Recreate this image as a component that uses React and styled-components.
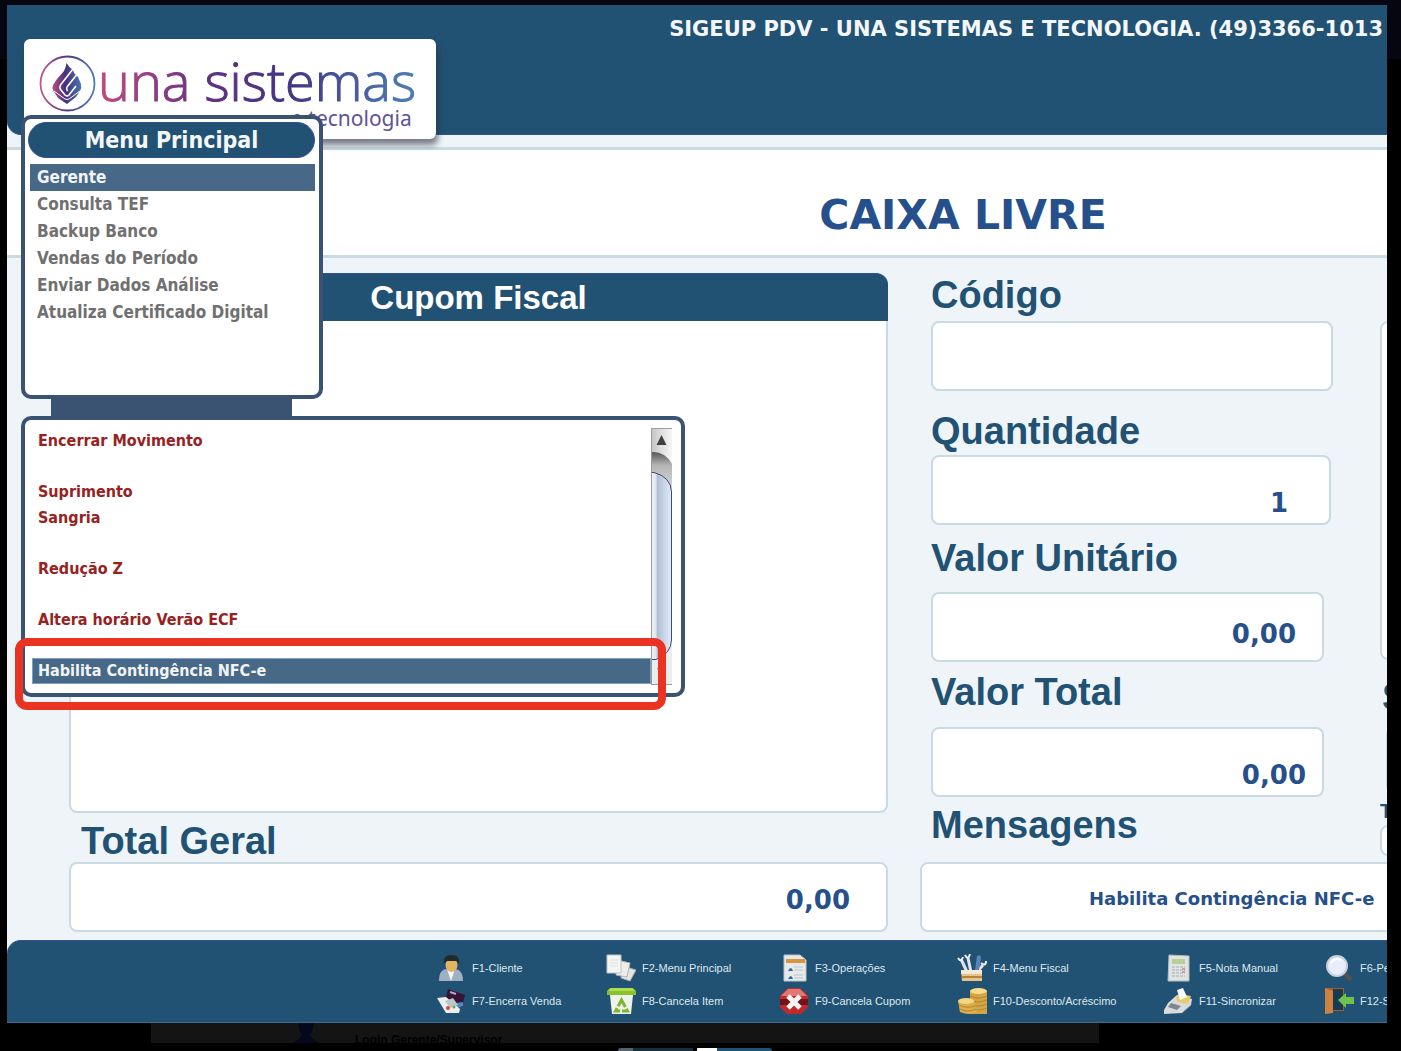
import React, { useState } from 'react';
import styled, { createGlobalStyle } from 'styled-components';

const GlobalStyle = createGlobalStyle`
  * {
    box-sizing: border-box;
  }

  body {
    margin: 0;
    background: #000;
    overflow: hidden;
  }

  button,
  input {
    font: inherit;
    color: inherit;
    border: 0;
    background: none;
  }
`;

const navy = '#225273';
const frame = '#3a5373';
const ink = '#25508b';
const line = '#c9dae3';
const verdana = "Verdana, 'DejaVu Sans', sans-serif";
const tahoma = "Tahoma, 'DejaVu Sans Condensed', 'DejaVu Sans', sans-serif";
const arial = "'Liberation Sans', Arial, sans-serif";

const Backdrop = styled.div`
  padding: 5px 14px 0 7px;
  background: linear-gradient(#05060f 59px, #000 59px);
`;

const Window = styled.main`
  position: relative;
  overflow: hidden;
  background: #eff4f9;
  border-bottom: 1px solid #3f6c8c;
`;

const TopBar = styled.header`
  display: flex;
  justify-content: space-between;
  align-items: flex-start;
  height: 130px;
  padding: 0 4px 0 17px;
  background: ${navy};
  border-bottom: 1px solid #34508f;
  border-bottom-left-radius: 14px;
`;

const LogoCard = styled.div`
  flex: none;
  width: 412px;
  height: 100px;
  margin-top: 34px;
  border-radius: 6px;
  background: #fff;
  box-shadow: 2px 6px 6px rgba(40, 45, 60, 0.6);

  svg {
    display: block;
  }
`;

const Company = styled.p`
  margin: 12px 0 0;
  font: bold 21px/24px ${verdana};
  color: #f4f7f9;
  white-space: nowrap;
`;

const Status = styled.section`
  margin-top: 12px;
  padding: 40px 0 15px 532px;
  background: #fff;
  border-top: 3px solid ${line};
  border-bottom: 3px solid ${line};
  text-align: center;

  h1 {
    margin: 0;
    font: bold 41px/50px ${verdana};
    color: ${ink};
    white-space: nowrap;
  }
`;

const Content = styled.div`
  display: grid;
  grid-template-columns: 819px 402px 1fr;
  column-gap: 43px;
  padding: 15px 0 8px 62px;
`;

const Column = styled.div`
  display: flex;
  flex-direction: column;
`;

const Coupon = styled.section`
  display: flex;
  flex-direction: column;
  height: 540px;
  background: #fff;
  border: 2px solid ${line};
  border-top: 0;
  border-radius: 12px 12px 8px 8px;

  h2 {
    margin: 0 -2px;
    border-top: 1px solid #34508f;
    border-radius: 12px 12px 0 0;
    background: ${navy};
    color: #fff;
    font: bold 33px/47px ${arial};
    text-align: center;
  }
`;

const Label = styled.label`
  padding-top: ${({ $drop }) => $drop || 0}px;
  padding-bottom: ${({ $rise }) => $rise || 0}px;
  padding-left: ${({ $indent }) => $indent || 0}px;
  font: bold 38px/${({ $height }) => $height}px ${arial};
  color: ${navy};
  white-space: nowrap;
`;

const Value = styled.input`
  width: ${({ $width }) => $width || '100%'};
  height: 70px;
  padding: ${({ $pad }) => $pad || '0'};
  background: #fff;
  border: 2px solid ${line};
  border-radius: 8px;
  color: ${ink};
  font: bold ${({ $size }) => $size || 26}px ${verdana};
  text-align: ${({ $align }) => $align || 'right'};
  outline: 0;
`;

const MessageField = styled.div`
  display: flex;
  flex-direction: column;
  margin-left: -11px;
  margin-right: -60px;
`;

const SideColumn = styled(Column)`
  margin-left: 4px;
`;

const SideBox = styled.div`
  height: ${({ $height }) => $height}px;
  margin-top: ${({ $top }) => $top || 0}px;
  margin-left: ${({ $indent }) => $indent || 0}px;
  background: ${({ $plain }) => ($plain ? '#e6edf2' : '#fff')};
  border: 2px solid ${line};
  border-right: 0;
  border-radius: 8px 0 0 8px;
`;

const SideLabel = styled.span`
  overflow: hidden;
  padding-top: ${({ $drop }) => $drop}px;
  padding-left: ${({ $indent }) => $indent || 0}px;
  font: bold ${({ $size }) => $size}px/${({ $height }) => $height}px ${arial};
  color: ${navy};
`;

const Shortcuts = styled.footer`
  display: grid;
  grid-template-columns: 170px 173px 178px 206px 161px 200px;
  row-gap: 4px;
  padding: 12px 0 7px 429px;
  background: ${navy};
  border-top: 1px solid #34508f;
  border-top-left-radius: 14px;
`;

const Shortcut = styled.button`
  display: flex;
  align-items: center;
  gap: 6px;
  height: 29px;
  padding: 0;
  color: #dce8ef;
  font: 11px/16px ${arial};
  white-space: nowrap;

  svg {
    flex: none;
  }
`;

const Menus = styled.nav`
  position: absolute;
  top: 110px;
  left: 14px;
`;

const Panel = styled.section`
  border: 4px solid ${frame};
  border-radius: 10px;
  background: #fff;
`;

const List = styled.ul`
  flex: 1;
  margin: 0;
  padding: 0;
  list-style: none;
`;

const MainMenu = styled(Panel)`
  width: 302px;
  height: 284px;
  padding: 3px 4px 3px 3px;

  h2 {
    margin: 0 0 6px;
    border: 1px solid #34508f;
    border-radius: 18px;
    background: ${navy};
    color: #f4f7f9;
    font: bold 23px/34px ${tahoma};
    text-align: center;
  }

  ${List} {
    padding-left: 2px;
  }
`;

const MainItem = styled.button`
  display: block;
  width: 100%;
  padding: 0 7px;
  background: ${({ $active }) => ($active ? '#476886' : 'transparent')};
  color: ${({ $active }) => ($active ? '#f1f4f6' : '#707070')};
  font: bold 17px/27px ${tahoma};
  text-align: left;
`;

const Connector = styled.div`
  width: 241px;
  height: 18px;
  margin: -1px 0 0 30px;
  background: ${frame};
`;

const SubMenu = styled(Panel)`
  display: flex;
  width: 664px;
  height: 281px;
  padding: 8px 8px 7px 7px;
`;

const SubItem = styled.li`
  margin-bottom: ${({ $space }) => ($space ? 25 : 0)}px;

  button {
    display: block;
    width: 100%;
    padding: 0 5px;
    border: 1px solid ${({ $active }) => ($active ? '#7ba0c8' : 'transparent')};
    background: ${({ $active }) => ($active ? '#476886' : 'transparent')};
    color: ${({ $active }) => ($active ? '#f1f4f6' : '#962222')};
    font: bold 16px/24px ${tahoma};
    text-align: left;
  }
`;

const Highlight = styled.div`
  position: absolute;
  top: 523px;
  left: -6px;
  width: 651px;
  height: 72px;
  border: 8px solid #ea3323;
  border-radius: 12px;
  pointer-events: none;
`;

const Behind = styled.div`
  display: flex;
  align-items: flex-start;
  gap: 34px;
  height: 20px;
  margin: 0 288px 0 144px;
  padding-left: 140px;
  overflow: hidden;
  background: #141414;
  color: #000;
  font: bold 12px/18px ${arial};

  p {
    margin: 8px 0 0;
  }
`;

const Tabs = styled.div`
  display: flex;
  gap: 4px;
  height: 8px;
  padding: 5px 0 0 611px;
`;

const Tab = styled.span`
  width: 75px;
  height: 3px;
  border-radius: ${({ $on }) => ($on ? '2px 6px 0 0' : '6px 2px 0 0')};
  background: ${({ $on }) => ($on ? 'linear-gradient(90deg, #fff 20px, #225273 20px)' : 'linear-gradient(90deg, #55636c 15px, #16303f 15px)')};
`;

const Logo = () => (
  <svg width="412" height="100" viewBox="24 39 412 100" role="img" aria-label="una sistemas e tecnologia">
    <defs>
      <linearGradient id="word" gradientUnits="userSpaceOnUse" x1="100" y1="0" x2="416" y2="0">
        <stop offset="0" stopColor="#bf4a80" />
        <stop offset=".35" stopColor="#5d3180" />
        <stop offset=".6" stopColor="#433582" />
        <stop offset="1" stopColor="#4a7fb5" />
      </linearGradient>
      <linearGradient id="ring" gradientUnits="userSpaceOnUse" x1="40" y1="0" x2="95" y2="0">
        <stop offset="0" stopColor="#c8558c" />
        <stop offset=".5" stopColor="#4f3a86" />
        <stop offset="1" stopColor="#4a7fb5" />
      </linearGradient>
      <linearGradient id="flame" gradientUnits="userSpaceOnUse" x1="52" y1="0" x2="81" y2="0">
        <stop offset="0" stopColor="#c04f86" />
        <stop offset=".45" stopColor="#46307c" />
        <stop offset="1" stopColor="#4876ae" />
      </linearGradient>
    </defs>
    <circle cx="67.500" cy="83.500" r="27" fill="none" stroke="url(#ring)" strokeWidth="1.800" />
    <path
      d="M66.500 63 69.500 67 73 70 74 73 78 77 81 84Q82 88 80 91L76 97 67 104 58 98 53.500 91Q51.500 88 53 85L57 79 64 71Q66 67 66.500 63Z"
      fill="url(#flame)"
    />
    <path
      d="M73 69 60.500 85Q59 88 61 90L65 95Q67 97 69 95L76 86M76.500 75 67 87Q66 89 67.500 91"
      fill="none"
      stroke="#fff"
      strokeWidth="1.600"
    />
    <path d="M54 91 65 99Q67 100 69 99L80 91" fill="none" stroke="#fff" strokeWidth="1" />
    <text
      x="98"
      y="101"
      fontFamily="'Open Sans', sans-serif"
      fontWeight="300"
      fontSize="54"
      fill="url(#word)"
      stroke="url(#word)"
      strokeWidth="1"
    >
      una sistemas
    </text>
    <text x="291" y="126" fontFamily="'Noto Sans', sans-serif" fontSize="21" fill="#5f5397">e tecnologia</text>
  </svg>
);

const ScrollBar = () => (
  <svg width="22" height="257" viewBox="0 0 22 257" aria-hidden="true">
    <defs>
      <linearGradient id="track">
        <stop offset="0" stopColor="#c4c4c4" />
        <stop offset=".5" stopColor="#dedede" />
        <stop offset="1" stopColor="#f6f6f6" />
      </linearGradient>
      <linearGradient id="thumb">
        <stop offset="0" stopColor="#f2f4f6" />
        <stop offset=".25" stopColor="#dfe5ec" />
        <stop offset=".3" stopColor="#b0bdd2" />
        <stop offset="1" stopColor="#e2edfc" />
      </linearGradient>
      <linearGradient id="shade" x1="0" y1="0" x2="0" y2="1">
        <stop offset="0" stopColor="#555" />
        <stop offset=".35" stopColor="#b5b5b5" />
        <stop offset="1" stopColor="#d8d8d8" />
      </linearGradient>
    </defs>
    <path d="M0 .5h21v256H0Z" fill="url(#track)" />
    <path d="M0 24q14-1 21 12v26H0Z" fill="url(#shade)" />
    <path d="M0 215h21v41H0Z" fill="#ececec" />
    <path d="M0 44.500h3Q20 49 20.500 64v148Q20 226 5 231.500H0Z" fill="url(#thumb)" stroke="#3d4a60" />
    <path d="M.5 257V.5H21M0 256.500h21" fill="none" stroke="#9c9c9c" />
    <path d="M10.500 7 15.500 17h-10Z" fill="#3f3f3f" />
    <path d="M6 240h9l-4.500 9Z" fill="#777" />
  </svg>
);

const drawings = {
  client: (
    <>
      <path d="M3 27c0-9 3-12 9-12h6c6 0 9 4 9 12Z" fill="#9fb0c4" />
      <path d="m11 15 4 12 4-12Z" fill="#f5f7fa" />
      <ellipse cx="15.500" cy="11" rx="6" ry="7" fill="#e2b562" />
      <path d="M8 10C7 4 10 1 15.500 1S24 4 23 10c-2-4-4-3-7-3s-6-1-8 3Z" fill="#222a2c" />
    </>
  ),
  pages: (
    <>
      <path d="m17 12 13 4-6 11-9-3Z" fill="#e4e4e4" stroke="#aaa" />
      <path d="m11 6 13 3-3 14-11-2Z" fill="#ededed" stroke="#b5b5b5" />
      <path d="M1 1h14v18H1Z" fill="#f5f5f5" stroke="#c2c2c2" />
      <path d="M4 6h8M4 9h8M4 12h8" stroke="#ddd" />
    </>
  ),
  report: (
    <>
      <path d="M5 1h16l6 5v21H5Z" fill="#e6e9ec" stroke="#bcc3c9" />
      <path d="M7 5h19v4H7Z" fill="#dd9339" />
      <path d="M15 13h9M15 16h9M15 21h9M15 24h9" stroke="#bbc4cc" />
      <path d="M9 17q3-6 5 0ZM9 25q3-6 5 0Z" fill="#356b9b" />
    </>
  ),
  tools: (
    <>
      <path d="m4 5 6 13M11 4l3 14M26 11l-7 8" stroke="#dfe4e8" strokeWidth="3" />
      <path d="M1 4q3 5 5-1M8 1q3 6 5-1M24 9q5 4 5-2" fill="none" stroke="#eef1f3" strokeWidth="2" />
      <path d="M20 2q4-2 4 2l-2 12h-4Z" fill="#5a83bd" />
      <path d="M4 16h21v11H5Z" fill="#e3c48b" />
      <path d="M4 16h21v4H4Z" fill="#f5e9d3" />
      <path d="M5 23h20" stroke="#b9823c" strokeWidth="2" />
    </>
  ),
  calculator: (
    <>
      <path d="m6 1 20 1v25H5Z" fill="#dfe4e3" stroke="#b5bdba" />
      <path d="M9 5h13v5H9Z" fill="#b8cf96" />
      <path d="M9 13h13M9 16h13M9 19h13M9 22h13" stroke="#a5adb0" strokeDasharray="3 1" />
      <path d="M19 15h3M19 18h3" stroke="#d35b55" />
    </>
  ),
  search: (
    <>
      <path d="m20 19 7 7" stroke="#57504d" strokeWidth="4" />
      <circle cx="13" cy="12" r="10" fill="#e8edfa" stroke="#c7d0dc" strokeWidth="2" />
      <path d="M7 9q4-6 10-3" fill="none" stroke="#fff" strokeWidth="2" />
    </>
  ),
  card: (
    <>
      <path d="m12 2 17 6-3 12-17-6Z" fill="#351436" />
      <path d="m14 5 6 2" stroke="#c5a6c2" strokeWidth="2" />
      <path d="m20 16 7-1v4l-6 2Z" fill="#5587c2" />
      <path d="m1 11 9-1 14 12-1 4H10Z" fill="#eceeee" />
      <path d="m9 14 8-3 5 7-8 3Z" fill="#c0c5c8" />
      <circle cx="12" cy="21" r="2" fill="#d64b3c" />
      <circle cx="18" cy="20" r="1.500" fill="#57b055" />
    </>
  ),
  bin: (
    <>
      <path d="M4 8h23l-2 19H6Z" fill="#eef2ec" />
      <path d="M1 4 4 1h23l3 3v4H1Z" fill="#8abf2e" />
      <path d="M2 4 5 1h21l3 3Z" fill="#aede4d" />
      <path d="m15.500 13 6 11h-12Z" fill="none" stroke="#7fb52f" strokeWidth="3" strokeDasharray="8 2" />
    </>
  ),
  cancel: (
    <>
      <path d="M9 1h12l8 8v11l-7 7H8l-7-7V9Z" fill="#c1292c" />
      <path d="M9 2h12l7 7H2Z" fill="#e27876" />
      <path d="M1 12h28v6H1Z" fill="#701417" />
      <path d="m9 9 12 12M21 9 9 21" stroke="#f4f4f4" strokeWidth="5" />
    </>
  ),
  coins: (
    <>
      <path d="M13 4h17v23H13Z" fill="#d4a544" />
      <ellipse cx="21.500" cy="4" rx="8.500" ry="3" fill="#f6dd8b" />
      <path d="M13 9q8 4 17 0M13 13q8 4 17 0M13 17q8 4 17 0M13 21q8 4 17 0" fill="none" stroke="#b5852e" />
      <path d="M1 14h16l3 11q-8 4-17 0Z" fill="#dcae4e" />
      <ellipse cx="9" cy="14" rx="8" ry="3" fill="#f4d780" />
      <path d="M2 18q7 4 16 1M3 22q7 4 16 0" fill="none" stroke="#b5852e" />
    </>
  ),
  printer: (
    <>
      <path d="m5 16 9-8 15 4-1 6-9 8-18 1v-4Z" fill="#d8dcdc" />
      <path d="m13 10 3-3 12 2-3 8-11-2Z" fill="#e6cc70" />
      <path d="m14 3 6-2 4 9-7 3Z" fill="#fff" />
      <path d="m8 16 10 3-4 4-9-3Z" fill="#7d878c" />
      <path d="m19 26 9-8" stroke="#8f999e" />
    </>
  ),
  exit: (
    <>
      <path d="M1 1h19v23H1Z" fill="#a65e28" />
      <path d="M9 2h10v21H9Z" fill="#183b51" />
      <path d="m1 1 8 3v22l-8 1Z" fill="#cf8142" />
      <path d="m14 13 8-7v4h8v7h-8v4Z" fill="#6fc24d" />
    </>
  ),
};

const Icon = ({ name }) => (
  <svg width="30" height="28" viewBox="0 0 30 28" aria-hidden="true">
    {drawings[name]}
  </svg>
);

const shortcuts = [
  ['client', 'F1-Cliente'],
  ['pages', 'F2-Menu Principal'],
  ['report', 'F3-Operações'],
  ['tools', 'F4-Menu Fiscal'],
  ['calculator', 'F5-Nota Manual'],
  ['search', 'F6-Pesquisa'],
  ['card', 'F7-Encerra Venda'],
  ['bin', 'F8-Cancela Item'],
  ['cancel', 'F9-Cancela Cupom'],
  ['coins', 'F10-Desconto/Acréscimo'],
  ['printer', 'F11-Sincronizar'],
  ['exit', 'F12-Sair'],
];

const mainItems = [
  'Gerente',
  'Consulta TEF',
  'Backup Banco',
  'Vendas do Período',
  'Enviar Dados Análise',
  'Atualiza Certificado Digital',
];

const subItems = [
  { name: 'Encerrar Movimento', space: true },
  { name: 'Suprimento' },
  { name: 'Sangria', space: true },
  { name: 'Redução Z', space: true },
  { name: 'Altera horário Verão ECF', space: true },
  { name: 'Habilita Contingência NFC-e' },
];

const App = () => {
  const [mainItem, setMainItem] = useState('Gerente');
  const [subItem, setSubItem] = useState('Habilita Contingência NFC-e');

  return (
    <Backdrop>
      <GlobalStyle />
      <Window>
        <TopBar>
          <LogoCard>
            <Logo />
          </LogoCard>
          <Company>SIGEUP PDV - UNA SISTEMAS E TECNOLOGIA. (49)3366-1013</Company>
        </TopBar>

        <Status>
          <h1>CAIXA LIVRE</h1>
        </Status>

        <Content>
          <Column>
            <Coupon>
              <h2>Cupom Fiscal</h2>
            </Coupon>
            <Label htmlFor="total" $height={41} $drop={8} $indent={12}>Total Geral</Label>
            <Value id="total" readOnly value="0,00" $pad="6px 36px 0 0" />
          </Column>

          <Column>
            <Label htmlFor="code" $height={44} $rise={4}>Código</Label>
            <Value id="code" readOnly value="" />
            <Label htmlFor="quantity" $height={48} $drop={16}>Quantidade</Label>
            <Value id="quantity" readOnly value={1} $width="400px" $pad="26px 41px 0 0" />
            <Label htmlFor="unit" $height={67}>Valor Unitário</Label>
            <Value id="unit" readOnly value="0,00" $width="393px" $pad="14px 26px 0 0" />
            <Label htmlFor="amount" $height={61} $rise={4}>Valor Total</Label>
            <Value id="amount" readOnly value="0,00" $width="393px" $pad="26px 16px 0 0" />
            <Label htmlFor="message" $height={57} $rise={8}>Mensagens</Label>
            <MessageField>
              <Value
                id="message"
                readOnly
                value="Habilita Contingência NFC-e"
                $size={18}
                $align="left"
                $pad="2px 0 0 167px"
              />
            </MessageField>
          </Column>

          <SideColumn>
            <SideBox $top={48} $height={339} />
            <SideLabel $size={38} $height={59} $drop={8} $indent={2}>S</SideLabel>
            <SideBox $height={66} $indent={6} $plain />
            <SideLabel $size={20} $height={28} $drop={4}>T</SideLabel>
            <SideBox $height={31} />
          </SideColumn>
        </Content>

        <Shortcuts>
          {shortcuts.map(([icon, name]) => (
            <Shortcut key={name} type="button">
              <Icon name={icon} />
              {name}
            </Shortcut>
          ))}
        </Shortcuts>

        <Menus>
          <MainMenu>
            <h2>Menu Principal</h2>
            <List>
              {mainItems.map(name => (
                <li key={name}>
                  <MainItem type="button" $active={name === mainItem} onClick={() => setMainItem(name)}>
                    {name}
                  </MainItem>
                </li>
              ))}
            </List>
          </MainMenu>
          <Connector />
          <SubMenu>
            <List>
              {subItems.map(({ name, space }) => (
                <SubItem key={name} $space={space} $active={name === subItem}>
                  <button type="button" onClick={() => setSubItem(name)}>{name}</button>
                </SubItem>
              ))}
            </List>
            <ScrollBar />
          </SubMenu>
          <Highlight />
        </Menus>
      </Window>

      <Behind>
        <svg width="30" height="20" viewBox="0 0 30 20" aria-hidden="true">
          <path d="M7 0h16q-1 8-4 12 2 4 9 8H2q6-3 9-8-3-4-4-12Z" fill="#05071c" />
        </svg>
        <p>Login Gerente/Supervisor</p>
      </Behind>
      <Tabs>
        <Tab />
        <Tab $on />
      </Tabs>
    </Backdrop>
  );
};

export default App;
